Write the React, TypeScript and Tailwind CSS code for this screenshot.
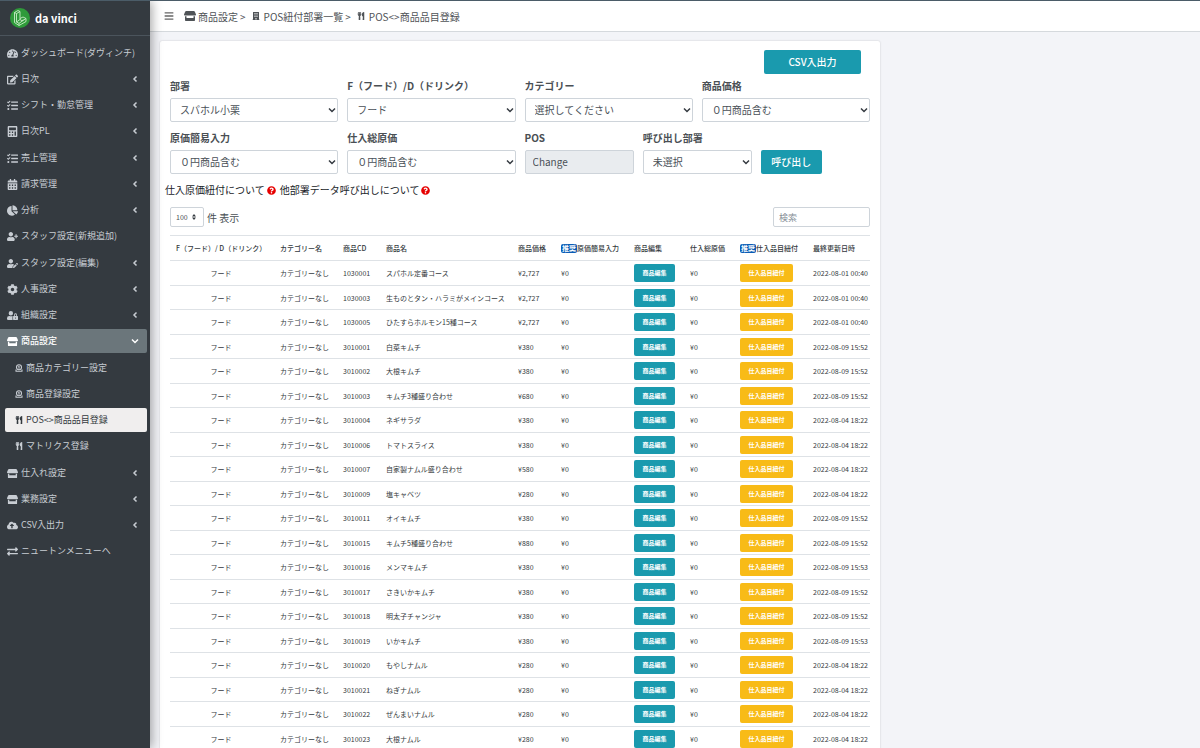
import React from 'react';
import {
  FaBars,
  FaBuilding,
  FaCalculator,
  FaCalendarAlt,
  FaChartPie,
  FaCloudUploadAlt,
  FaCog,
  FaEdit,
  FaExchangeAlt,
  FaQuestionCircle,
  FaTachometerAlt,
  FaTasks,
  FaUserEdit,
  FaUserLock,
  FaUserPlus,
  FaUtensils,
} from 'react-icons/fa';

type IconType = React.ComponentType<{ className?: string }>;

interface NavItem {
  label: string;
  icon: IconType;
  arrow?: boolean;
  open?: boolean;
  sub?: boolean;
  current?: boolean;
}

const StoreIcon: IconType = ({ className }) => (
  <svg viewBox="0 0 24 22" fill="currentColor" className={className}>
    <path d="M4.500 1h15c1 0 1.600.4 2 1.200L24 8c0 1.500-.8 2.200-2 2.200H2C.8 10.200 0 9.500 0 8l2.500-5.800C2.900 1.400 3.500 1 4.500 1z" />
    <path d="M2 11.500h3V15h14v-3.500h3v8c0 1-.6 1.500-1.500 1.500h-17C2.600 21 2 20.500 2 19.500z" />
  </svg>
);

const CoinIcon: IconType = ({ className }) => (
  <svg viewBox="0 0 16 16" fill="none" stroke="currentColor" strokeWidth="2.2" className={className}>
    <circle cx="8" cy="6.500" r="5" />
    <path d="M8 3.500v6M6.500 5h2M1 14.500h14M2 11v3.500M14 11v3.500" />
  </svg>
);

const ChevronIcon = ({ down }: { down?: boolean }) => (
  <svg viewBox="0 0 8 8" fill="none" stroke="currentColor" strokeWidth="1.5" className="size-2 shrink-0">
    <path d={down ? 'M1 2.500l3 3 3-3' : 'M5.500 1.500L3 4l2.500 2.500'} />
  </svg>
);

const Logo = () => (
  <svg viewBox="0 0 20 20" className="size-5 shrink-0">
    <circle cx="10" cy="10" r="10" fill="#2f9a3a" />
    <g fill="none" stroke="#c9ecc6" strokeWidth="0.9" strokeLinejoin="round">
      <path d="M4.500 4.500l3.500-2 2 1v8M4.500 4.500v10l4.500 3 7-4v-3l-3-1.500-3 1.500" />
      <path d="M4.500 4.500l2 1v8.500l2.500 1.300 7-4.800M6.500 5.500L10 3.500M9 15.300v2.200M6.500 14l3.500-2.500 2 1.200 1.500-1" />
    </g>
  </svg>
);

const navSections: NavItem[][] = [
  [
    { label: 'ダッシュボード(ダヴィンチ)', icon: FaTachometerAlt },
    { label: '日次', icon: FaEdit, arrow: true },
    { label: 'シフト・勤怠管理', icon: FaTasks, arrow: true },
    { label: '日次PL', icon: FaCalculator, arrow: true },
  ],
  [
    { label: '売上管理', icon: FaTasks, arrow: true },
    { label: '請求管理', icon: FaCalendarAlt, arrow: true },
    { label: '分析', icon: FaChartPie, arrow: true },
    { label: 'スタッフ設定(新規追加)', icon: FaUserPlus },
  ],
  [
    { label: 'スタッフ設定(編集)', icon: FaUserEdit, arrow: true },
    { label: '人事設定', icon: FaCog, arrow: true },
    { label: '組織設定', icon: FaUserLock, arrow: true },
    { label: '商品設定', icon: StoreIcon, arrow: true, open: true },
  ],
  [
    { label: '商品カテゴリー設定', icon: CoinIcon, sub: true },
    { label: '商品登録設定', icon: CoinIcon, sub: true },
    { label: 'POS<>商品品目登録', icon: FaUtensils, sub: true, current: true },
    { label: 'マトリクス登録', icon: FaUtensils, sub: true },
  ],
  [
    { label: '仕入れ設定', icon: StoreIcon, arrow: true },
    { label: '業務設定', icon: StoreIcon, arrow: true },
    { label: 'CSV入出力', icon: FaCloudUploadAlt, arrow: true },
    { label: 'ニュートンメニューへ', icon: FaExchangeAlt },
  ],
];

const products = [
  { code: '1030001', name: 'スパホル定番コース', price: '¥2,727', updated: '2022-08-01 00:40' },
  { code: '1030003', name: '生ものとタン・ハラミがメインコース', price: '¥2,727', updated: '2022-08-01 00:40' },
  { code: '1030005', name: 'ひたすらホルモン15種コース', price: '¥2,727', updated: '2022-08-01 00:40' },
  { code: '3010001', name: '白菜キムチ', price: '¥380', updated: '2022-08-09 15:52' },
  { code: '3010002', name: '大根キムチ', price: '¥380', updated: '2022-08-09 15:52' },
  { code: '3010003', name: 'キムチ3種盛り合わせ', price: '¥680', updated: '2022-08-09 15:52' },
  { code: '3010004', name: 'ネギサラダ', price: '¥380', updated: '2022-08-04 18:22' },
  { code: '3010006', name: 'トマトスライス', price: '¥380', updated: '2022-08-04 18:22' },
  { code: '3010007', name: '自家製ナムル盛り合わせ', price: '¥580', updated: '2022-08-04 18:22' },
  { code: '3010009', name: '塩キャベツ', price: '¥280', updated: '2022-08-04 18:22' },
  { code: '3010011', name: 'オイキムチ', price: '¥380', updated: '2022-08-09 15:52' },
  { code: '3010015', name: 'キムチ5種盛り合わせ', price: '¥880', updated: '2022-08-09 15:52' },
  { code: '3010016', name: 'メンマキムチ', price: '¥380', updated: '2022-08-09 15:53' },
  { code: '3010017', name: 'さきいかキムチ', price: '¥380', updated: '2022-08-09 15:52' },
  { code: '3010018', name: '明太子チャンジャ', price: '¥380', updated: '2022-08-09 15:52' },
  { code: '3010019', name: 'いかキムチ', price: '¥380', updated: '2022-08-09 15:53' },
  { code: '3010020', name: 'もやしナムル', price: '¥280', updated: '2022-08-04 18:22' },
  { code: '3010021', name: 'ねぎナムル', price: '¥280', updated: '2022-08-04 18:22' },
  { code: '3010022', name: 'ぜんまいナムル', price: '¥280', updated: '2022-08-04 18:22' },
  { code: '3010023', name: '大根ナムル', price: '¥280', updated: '2022-08-04 18:22' },
];

const NavLink = ({ item }: { item: NavItem }) => {
  const Icon = item.icon;
  let look = 'text-[#c8cdd3] pl-[7px] gap-[3px]';
  if (item.open) look = 'bg-[#6b767b] text-white font-medium pl-[7px] gap-[3px] rounded-r-xs';
  if (item.sub) look = 'text-[#c8cdd3] ml-[5px] pl-[10px] gap-[3px]';
  if (item.current) look = 'bg-[#f0eeee] text-[#343a40] ml-[5px] pl-[10px] gap-[3px] rounded-xs';

  return (
    <li>
      <a href="#" className={`flex h-6 items-center pr-2 mr-[3px] text-[9px] whitespace-nowrap ${look}`}>
        <Icon className={item.sub ? 'size-2 shrink-0' : 'size-[11px] shrink-0'} />
        <span className="flex-1">{item.label}</span>
        {item.arrow && <ChevronIcon down={item.open} />}
      </a>
    </li>
  );
};

const Sidebar = () => (
  <aside className="relative z-10 w-[150px] shrink-0 bg-[#343a40] shadow-[2px_0_10px_rgba(0,0,0,0.35)]">
    <a href="#" className="flex h-[35px] items-center gap-[5px] border-b border-[#4b545c] pl-[10px] text-[11px] font-bold text-white">
      <Logo />
      da vinci
    </a>
    <nav className="flex flex-col gap-[3px] pt-[5px]">
      {navSections.map((section, i) => (
        <ul key={i} className="flex flex-col gap-[2px]">
          {section.map((item) => (
            <NavLink key={item.label} item={item} />
          ))}
        </ul>
      ))}
    </nav>
  </aside>
);

interface SelectFieldProps {
  id: string;
  label: string;
  value: string;
  className: string;
}

const SelectField = ({ id, label, value, className }: SelectFieldProps) => (
  <div className={className}>
    <label htmlFor={id} className="block h-[20px] text-[10px] leading-[16px] font-bold text-[#4a4f54]">
      {label}
    </label>
    <div className="relative">
      <select
        id={id}
        className="block h-6 w-full appearance-none rounded-xs border border-[#ced4da] bg-white pr-4 pb-[2px] pl-[9px] text-[10px] text-[#495057]"
      >
        <option>{value}</option>
      </select>
      <span className="pointer-events-none absolute top-2 right-[2px] text-[#343a40]">
        <ChevronIcon down />
      </span>
    </div>
  </div>
);

const RecommendBadge = () => (
  <span className="inline-block rounded-xs bg-[#0b5cb5] px-[1px] leading-[9px] font-bold text-white">推奨</span>
);

const Filters = () => (
  <form className="px-[10px]">
    <div className="flex justify-end pr-[9px]">
      <button type="button" className="h-6 w-[97px] rounded-xs bg-[#1a9aae] pb-[2px] text-[10px] font-medium text-white">
        CSV入出力
      </button>
    </div>
    <div className="mt-1 grid grid-cols-12 gap-x-[9px] gap-y-2">
      <SelectField id="dept" label="部署" value="スパホル小栗" className="col-span-3" />
      <SelectField id="fd" label="F（フード）/D（ドリンク）" value="フード" className="col-span-3" />
      <SelectField id="category" label="カテゴリー" value="選択してください" className="col-span-3" />
      <SelectField id="price" label="商品価格" value="０円商品含む" className="col-span-3" />
      <SelectField id="cost" label="原価簡易入力" value="０円商品含む" className="col-span-3" />
      <SelectField id="total" label="仕入総原価" value="０円商品含む" className="col-span-3" />
      <div className="col-span-2">
        <label htmlFor="pos" className="block h-[20px] text-[10px] leading-[16px] font-bold text-[#4a4f54]">
          POS
        </label>
        <input
          id="pos"
          readOnly
          value="Change"
          className="block h-6 w-full rounded-xs border border-[#ced4da] bg-[#e9ecef] px-[7px] pb-[2px] text-[10px] text-[#495057]"
        />
      </div>
      <SelectField id="call" label="呼び出し部署" value="未選択" className="col-span-2" />
      <div className="col-span-2 flex items-end">
        <button type="button" className="h-6 w-[61px] rounded-xs bg-[#1a9aae] pb-[2px] text-[10px] font-medium text-white">
          呼び出し
        </button>
      </div>
    </div>
  </form>
);

const th = 'h-[26px] border-y border-[#dee2e6] p-0 text-left font-medium';
const td = 'border-b border-[#dee2e6] p-0';

const ProductTable = () => (
  <table className="w-full table-fixed border-separate border-spacing-0 text-[7px] leading-[10px] whitespace-nowrap text-[#343a40]">
    <colgroup>
      <col className="w-[110px]" />
      <col className="w-[63px]" />
      <col className="w-[43px]" />
      <col />
      <col className="w-[43px]" />
      <col className="w-[73px]" />
      <col className="w-[56px]" />
      <col className="w-[50px]" />
      <col className="w-[73px]" />
      <col className="w-[57px]" />
    </colgroup>
    <thead>
      <tr>
        <th className={`${th} pl-[6px]`}>F（フード）/ D（ドリンク）</th>
        <th className={th}>カテゴリー名</th>
        <th className={th}>商品CD</th>
        <th className={th}>商品名</th>
        <th className={th}>商品価格</th>
        <th className={th}>
          <RecommendBadge />
          原価簡易入力
        </th>
        <th className={th}>商品編集</th>
        <th className={th}>仕入総原価</th>
        <th className={th}>
          <RecommendBadge />
          仕入品目紐付
        </th>
        <th className={th}>最終更新日時</th>
      </tr>
    </thead>
    <tbody>
      {products.map((product) => (
        <tr key={product.code} className="h-[25px] even:h-[24px]">
          <td className={`${td} pr-2 text-center`}>フード</td>
          <td className={td}>カテゴリーなし</td>
          <td className={td}>{product.code}</td>
          <td className={td}>{product.name}</td>
          <td className={td}>{product.price}</td>
          <td className={td}>¥0</td>
          <td className={td}>
            <button type="button" className="block h-[18px] w-[41px] rounded-xs bg-[#1a9aae] text-[6px] font-bold text-white">
              商品編集
            </button>
          </td>
          <td className={td}>¥0</td>
          <td className={td}>
            <button type="button" className="block h-[18px] w-[53px] rounded-xs bg-[#f8bb17] text-[6px] font-bold text-white">
              仕入品目紐付
            </button>
          </td>
          <td className={td}>{product.updated}</td>
        </tr>
      ))}
    </tbody>
  </table>
);

const TopBar = () => (
  <header className="flex h-[31px] items-center border-b border-[#d5d9dd] bg-white pl-[14px] text-[10px] text-[#4f5357]">
    <button type="button" aria-label="メニュー" className="mr-[10px]">
      <FaBars className="size-[10px] text-[#666]" />
    </button>
    <nav className="flex items-center">
      <StoreIcon className="mr-[2px] size-3" />
      <a href="#">商品設定</a>
      <span className="mx-[2px]">&gt;</span>
      <FaBuilding className="mx-1 size-2" />
      <a href="#">POS紐付部署一覧</a>
      <span className="mx-[2px]">&gt;</span>
      <FaUtensils className="mx-1 size-2" />
      <a href="#">POS&lt;&gt;商品品目登録</a>
    </nav>
  </header>
);

export default function App() {
  return (
    <div className="flex h-screen overflow-hidden border-t border-[#4b5c68] bg-[#f3f4f8] font-['Noto_Sans_CJK_JP',sans-serif]">
      <Sidebar />
      <div className="min-w-0 flex-1">
        <TopBar />
        <main className="mt-[9px] ml-[10px] max-w-[720px] rounded-xs bg-white pt-[9px] shadow-[0_0_2px_rgba(0,0,0,0.2)]">
          <Filters />
          <p className="mt-2 flex items-center gap-[2px] px-[5px] text-[10px] leading-[16px] text-[#212529]">
            仕入原価紐付について
            <FaQuestionCircle className="mr-[2px] size-[9px] text-[#e60000]" />
            他部署データ呼び出しについて
            <FaQuestionCircle className="size-[9px] text-[#e60000]" />
          </p>
          <div className="mt-[9px] flex items-center justify-between px-[10px]">
            <label className="flex items-center gap-[3px] text-[10px] text-[#4a4f54]">
              <span className="relative">
                <select className="block h-5 w-[34px] appearance-none rounded-xs border border-[#ced4da] bg-white pl-[5px] text-[7px]">
                  <option>100</option>
                </select>
                <svg viewBox="0 0 4 6" fill="#343a40" className="pointer-events-none absolute top-[7px] right-[8px] h-[6px] w-1">
                  <path d="M2 0l2 2.400H0zM2 6L0 3.600h4z" />
                </svg>
              </span>
              件 表示
            </label>
            <input
              type="search"
              aria-label="検索"
              placeholder="検索"
              className="h-5 w-[97px] rounded-xs border border-[#ced4da] px-[5px] text-[9px] placeholder:text-[#868e96]"
            />
          </div>
          <div className="mt-2 px-[10px]">
            <ProductTable />
          </div>
        </main>
      </div>
    </div>
  );
}
